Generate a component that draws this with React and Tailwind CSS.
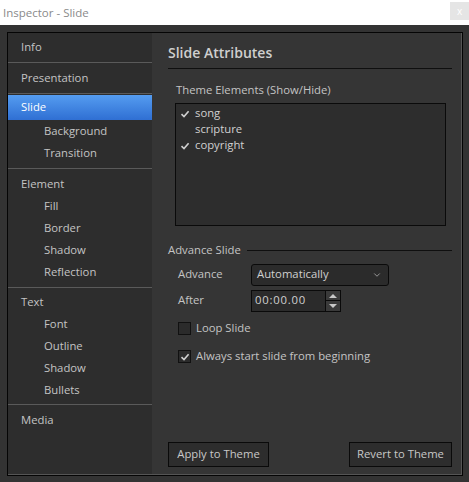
import { ChevronDown } from "lucide-react"

const font = { fontFamily: "'Open Sans', 'Noto Sans', sans-serif" }

function Check({ className = "" }) {
  return (
    <svg viewBox="0 0 10 10" className={className}>
      <path d="M1.5 5.2 L4 7.6 L8.6 2.2" fill="none" stroke="#d0d0d0" strokeWidth="1.6" />
    </svg>
  )
}

function NavItem({ label, sub, active }) {
  if (active) {
    return (
      <div className="h-[25px] flex items-center pl-[13px] text-white bg-gradient-to-b from-[#559cf0] to-[#2f6fd3]">
        {label}
      </div>
    )
  }
  return (
    <div className={`h-[22px] flex items-center ${sub ? "pl-[36px]" : "pl-[13px]"} text-[#c4c4c4]`}>
      {label}
    </div>
  )
}

function Sep({ className = "my-[4px]" }) {
  return <div className={`h-px bg-[#5a5a5a] ${className}`} />
}

function Sidebar() {
  return (
    <div className="w-[144px] bg-[#2d2d2d] pt-[3px] shrink-0">
      <NavItem label="Info" />
      <Sep />
      <NavItem label="Presentation" />
      <Sep className="mt-[4px] mb-[1px]" />
      <NavItem label="Slide" active />
      <NavItem label="Background" sub />
      <NavItem label="Transition" sub />
      <Sep />
      <NavItem label="Element" />
      <NavItem label="Fill" sub />
      <NavItem label="Border" sub />
      <NavItem label="Shadow" sub />
      <NavItem label="Reflection" sub />
      <Sep className="mt-[4px] mb-[3px]" />
      <NavItem label="Text" />
      <NavItem label="Font" sub />
      <NavItem label="Outline" sub />
      <NavItem label="Shadow" sub />
      <NavItem label="Bullets" sub />
      <Sep className="mt-[3px] mb-[4px]" />
      <NavItem label="Media" />
    </div>
  )
}

function Box({ checked }) {
  return (
    <div className="w-[13px] h-[13px] border border-[#111] bg-[#2b2b2b] flex items-center justify-center">
      {checked && <Check className="w-[10px] h-[10px]" />}
    </div>
  )
}

function SlidePanel() {
  const elements = [
    { name: "song", on: true },
    { name: "scripture", on: false },
    { name: "copyright", on: true },
  ]

  return (
    <div className="flex-1 bg-[#353535] flex flex-col pl-[16px] pr-[9px] pt-[10px] pb-[7px]">
      <div className="text-[14px] font-semibold text-[#cfcfcf] leading-[20px]">Slide Attributes</div>
      <div className="h-px bg-[#0f0f0f] mt-[5px]" />

      <div className="mt-[13px] ml-[8px] text-[#c4c4c4]">Theme Elements (Show/Hide)</div>
      <div className="mt-[4px] ml-[7px] w-[271px] h-[123px] border border-[#0a0a0a] bg-[#2d2d2d] pt-[2px] pl-[4px]">
        {elements.map((el) => (
          <div key={el.name} className="h-[16px] flex items-center text-[#d0d0d0]">
            <div className="w-[15px] flex items-center">
              {el.on && <Check className="w-[10px] h-[10px]" />}
            </div>
            {el.name}
          </div>
        ))}
      </div>

      <div className="mt-[16px] flex items-center gap-[6px]">
        <span className="text-[#c4c4c4]">Advance Slide</span>
        <div className="flex-1 h-px bg-[#0f0f0f]" />
      </div>

      <div className="mt-[5px] ml-[10px] flex flex-col">
        <div className="flex items-center h-[22px]">
          <span className="w-[73px] text-[#c4c4c4]">Advance</span>
          <div className="w-[138px] h-[22px] rounded-[3px] border border-[#0a0a0a] bg-[#2b2b2b] flex items-center justify-between pl-[5px] pr-[6px] text-[#d0d0d0]">
            Automatically
            <ChevronDown size={10} strokeWidth={2} color="#aaa" />
          </div>
        </div>
        <div className="flex items-center h-[22px] mt-[4px]">
          <span className="w-[73px] text-[#c4c4c4]">After</span>
          <div className="w-[90px] h-[22px] border border-[#0a0a0a] bg-[#2b2b2b] flex items-center">
            <span className="flex-1 pl-[3px] text-[#d0d0d0] tracking-[0.8px]">00:00.00</span>
            <div className="w-[15px] h-full border-l border-[#0a0a0a] flex flex-col">
              <div className="flex-1 flex items-center justify-center bg-[#3a3a3a] border-b border-[#0a0a0a]">
                <svg viewBox="0 0 8 4" className="w-[8px] h-[4px]"><path d="M0 4 L4 0 L8 4Z" fill="#c8c8c8" /></svg>
              </div>
              <div className="flex-1 flex items-center justify-center bg-[#3a3a3a]">
                <svg viewBox="0 0 8 4" className="w-[8px] h-[4px]"><path d="M0 0 L4 4 L8 0Z" fill="#c8c8c8" /></svg>
              </div>
            </div>
          </div>
        </div>
        <div className="flex items-center gap-[5px] mt-[9px] h-[16px]">
          <Box />
          <span className="text-[#c4c4c4]">Loop Slide</span>
        </div>
        <div className="flex items-center gap-[5px] mt-[12px] h-[16px]">
          <Box checked />
          <span className="text-[#c4c4c4]">Always start slide from beginning</span>
        </div>
      </div>

      <div className="mt-auto flex justify-between">
        <button className="h-[25px] w-[101px] border border-[#0a0a0a] bg-[#2d2d2d] text-[#c8c8c8]">Apply to Theme</button>
        <button className="h-[25px] w-[103px] border border-[#0a0a0a] bg-[#2d2d2d] text-[#c8c8c8]">Revert to Theme</button>
      </div>
    </div>
  )
}

export default function App() {
  return (
    <div className="w-[469px] h-[482px] flex flex-col text-[11.3px] bg-[#333333]" style={font}>
      {/* window title */}
      <div className="h-[25px] bg-white flex items-start justify-between shrink-0">
        <span className="pl-[3px] pt-[4px] text-[11.5px] text-[#8a8a8a]">Inspector - Slide</span>
        <div className="w-[19px] h-[18px] mt-[2px] bg-[#e5e5e5] flex items-center justify-center text-white text-[10px]">x</div>
      </div>

      <div className="flex-1 pt-[7px] pl-[7px] pr-[6px] pb-[6px] flex">
        <div className="flex-1 flex border border-[#050505]">
          <div className="flex-1 flex border-r border-b border-[#555]">
            <Sidebar />
            <SlidePanel />
          </div>
        </div>
      </div>
    </div>
  )
}
